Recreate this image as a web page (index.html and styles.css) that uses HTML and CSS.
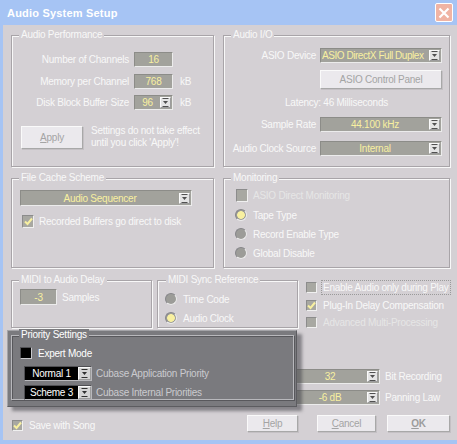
FILE: index.html
```html
<!DOCTYPE html>
<html>
<head>
    <title>Audio System Setup</title>
    <link rel="stylesheet" href="styles.css">
</head>
<body>
<div class="window">
    <div class="titlebar">
        <span class="title">Audio System Setup</span>
        <span class="close-btn">
            <svg width="12" height="12" viewBox="0 0 12 12"><path d="M1.5 1.5l9 9M10.5 1.5l-9 9" stroke="#fff" stroke-width="2.2" fill="none"/></svg>
        </span>
    </div>

    <div class="dialog">
        <div class="grid">
            <!-- Audio Performance -->
            <div class="group perf">
                <div class="group-title">Audio Performance</div>
                <div class="form-rows">
                    <div class="form-row">
                        <span class="lbl">Number of Channels</span>
                        <span class="field num">16</span>
                    </div>
                    <div class="form-row">
                        <span class="lbl">Memory per Channel</span>
                        <span class="field num">768</span>
                        <span class="unit">kB</span>
                    </div>
                    <div class="form-row">
                        <span class="lbl">Disk Block Buffer Size</span>
                        <span class="field num select">
                            <span class="val">96</span>
                            <span class="spin"><svg width="7" height="9" viewBox="0 0 7 9"><path d="M0.5 0.5h6M0.5 8.5h6" stroke="#505050"/><path d="M1 3h5L3.5 6z" fill="#505050"/></svg></span>
                        </span>
                        <span class="unit">kB</span>
                    </div>
                </div>
                <div class="apply-row">
                    <span class="btn apply-btn"><u>A</u>pply</span>
                    <span class="apply-note">Settings do not take effect<br>until you click 'Apply'!</span>
                </div>
            </div>

            <!-- Audio I/O -->
            <div class="group io">
                <div class="group-title">Audio I/O</div>
                <div class="io-row first">
                    <span class="io-lbl">ASIO Device</span>
                    <span class="field select io-field">
                        <span class="val left">ASIO DirectX Full Duplex</span>
                        <span class="spin"><svg width="7" height="9" viewBox="0 0 7 9"><path d="M0.5 0.5h6M0.5 8.5h6" stroke="#505050"/><path d="M1 3h5L3.5 6z" fill="#505050"/></svg></span>
                    </span>
                </div>
                <span class="btn control-btn">ASIO Control Panel</span>
                <div class="latency">Latency: 46 Milliseconds</div>
                <div class="io-row rate">
                    <span class="io-lbl">Sample Rate</span>
                    <span class="field select io-field">
                        <span class="val">44.100 kHz</span>
                        <span class="spin"><svg width="7" height="9" viewBox="0 0 7 9"><path d="M0.5 0.5h6M0.5 8.5h6" stroke="#505050"/><path d="M1 3h5L3.5 6z" fill="#505050"/></svg></span>
                    </span>
                </div>
                <div class="io-row clock">
                    <span class="io-lbl">Audio Clock Source</span>
                    <span class="field select io-field">
                        <span class="val">Internal</span>
                        <span class="spin"><svg width="7" height="9" viewBox="0 0 7 9"><path d="M0.5 0.5h6M0.5 8.5h6" stroke="#505050"/><path d="M1 3h5L3.5 6z" fill="#505050"/></svg></span>
                    </span>
                </div>
            </div>

            <!-- File Cache Scheme -->
            <div class="group cache">
                <div class="group-title">File Cache Scheme</div>
                <span class="field select cache-field">
                    <span class="val">Audio Sequencer</span>
                    <span class="spin"><svg width="7" height="9" viewBox="0 0 7 9"><path d="M0.5 0.5h6M0.5 8.5h6" stroke="#505050"/><path d="M1 3h5L3.5 6z" fill="#505050"/></svg></span>
                </span>
                <div class="check-row cache-check">
                    <span class="checkbox big"><svg width="9" height="9" viewBox="0 0 9 9"><path d="M1 4.5l2.5 2.5L8 1.5" stroke="#f8f0a0" stroke-width="2" fill="none"/></svg></span>
                    Recorded Buffers go direct to disk
                </div>
            </div>

            <!-- Monitoring -->
            <div class="group monitor">
                <div class="group-title">Monitoring</div>
                <div class="check-row mon-check disabled">
                    <span class="checkbox big"></span>
                    ASIO Direct Monitoring
                </div>
                <div class="radio-row"><span class="radio on"></span>Tape Type</div>
                <div class="radio-row"><span class="radio"></span>Record Enable Type</div>
                <div class="radio-row"><span class="radio"></span>Global Disable</div>
            </div>
        </div>

        <div class="row3">
            <div class="group midi-delay">
                <div class="group-title">MIDI to Audio Delay</div>
                <div class="delay-row">
                    <span class="field delay-field">-3</span>
                    <span>Samples</span>
                </div>
            </div>
            <div class="group midi-sync">
                <div class="group-title">MIDI Sync Reference</div>
                <div class="radio-row"><span class="radio"></span>Time Code</div>
                <div class="radio-row"><span class="radio on"></span>Audio Clock</div>
            </div>
            <div class="options">
                <div class="check-row opt">
                    <span class="checkbox"></span>
                    <span class="focus">Enable Audio only during Play</span>
                </div>
                <div class="check-row opt">
                    <span class="checkbox"><svg width="9" height="9" viewBox="0 0 9 9"><path d="M1 4.5l2.5 2.5L8 1.5" stroke="#f8f0a0" stroke-width="2" fill="none"/></svg></span>
                    <span class="opt-text">Plug-In Delay Compensation</span>
                </div>
                <div class="check-row opt disabled">
                    <span class="checkbox"></span>
                    <span class="opt-text">Advanced Multi-Processing</span>
                </div>
            </div>
        </div>

        <div class="row4">
            <div class="bit-row">
                <span class="field select bit-field">
                    <span class="val">32</span>
                    <span class="spin"><svg width="7" height="9" viewBox="0 0 7 9"><path d="M0.5 0.5h6M0.5 8.5h6" stroke="#505050"/><path d="M1 3h5L3.5 6z" fill="#505050"/></svg></span>
                </span>
                <span>Bit Recording</span>
            </div>
            <div class="bit-row">
                <span class="field select bit-field">
                    <span class="val">-6 dB</span>
                    <span class="spin"><svg width="7" height="9" viewBox="0 0 7 9"><path d="M0.5 0.5h6M0.5 8.5h6" stroke="#505050"/><path d="M1 3h5L3.5 6z" fill="#505050"/></svg></span>
                </span>
                <span>Panning Law</span>
            </div>
        </div>

        <div class="row5">
            <div class="check-row save">
                <span class="checkbox"><svg width="9" height="9" viewBox="0 0 9 9"><path d="M1 4.5l2.5 2.5L8 1.5" stroke="#f8f0a0" stroke-width="2" fill="none"/></svg></span>
                Save with Song
            </div>
            <span class="btn help-btn"><u>H</u>elp</span>
            <span class="btn cancel-btn"><u>C</u>ancel</span>
            <span class="btn ok-btn"><u>O</u>K</span>
        </div>
    </div>

    <!-- floating priority settings panel -->
    <div class="priority-panel">
        <div class="group dark">
            <div class="group-title">Priority Settings</div>
            <div class="check-row expert">
                <span class="checkbox black"></span>
                Expert Mode
            </div>
            <div class="prio-row first">
                <span class="field select black-select">
                    <span class="val">Normal 1</span>
                    <span class="spin light"><svg width="7" height="9" viewBox="0 0 7 9"><path d="M0.5 0.5h6M0.5 8.5h6" stroke="#303030"/><path d="M1 3h5L3.5 6z" fill="#303030"/></svg></span>
                </span>
                <span class="prio-lbl">Cubase Application Priority</span>
            </div>
            <div class="prio-row">
                <span class="field select black-select">
                    <span class="val">Scheme 3</span>
                    <span class="spin light"><svg width="7" height="9" viewBox="0 0 7 9"><path d="M0.5 0.5h6M0.5 8.5h6" stroke="#303030"/><path d="M1 3h5L3.5 6z" fill="#303030"/></svg></span>
                </span>
                <span class="prio-lbl">Cubase Internal Priorities</span>
            </div>
        </div>
    </div>
</div>
</body>
</html>
```

FILE: styles.css
```css
body {
    margin: 0;
    font-family: "Liberation Sans", Arial, sans-serif;
    font-size: 10px;
    letter-spacing: -0.25px;
    color: #f8f8f8;
}
.window {
    position: relative;
    width: 457px;
    height: 444px;
    box-sizing: border-box;
    background: #d4d0d4;
    border-left: 3px solid #a6c4f4;
    border-bottom: 4px solid #a6c4f4;
    overflow: hidden;
}
.titlebar {
    height: 25px;
    padding: 0 4px;
    background: #a6c4f4;
    display: flex;
    align-items: center;
}
.title {
    font-size: 11px;
    font-weight: bold;
    letter-spacing: 0.2px;
    color: #fff;
}
.close-btn {
    margin-left: auto;
    width: 16px;
    height: 17px;
    background: #f0b4a4;
    border: 1px solid #fff;
    border-radius: 2px;
    display: flex;
    align-items: center;
    justify-content: center;
}

.dialog {
    padding: 10px 7px 0 8px;
}
.grid {
    display: grid;
    grid-template-columns: 203px 227px;
    grid-template-rows: 132px 90px;
    gap: 11px 9px;
}

/* group boxes */
.group {
    box-sizing: border-box;
    border: 1px solid #a8a4a8;
    box-shadow: inset 1px 1px 0 #f8f8f8, 1px 1px 0 #f8f8f8;
}
.group-title {
    width: max-content;
    margin: -7px 0 0 7px;
    padding: 0 2px;
    line-height: 12px;
    background: #d4d0d4;
}

/* fields */
.field {
    box-sizing: border-box;
    height: 15px;
    background: #a2a29c;
    border: 1px solid;
    border-color: #8c8c88 #ececec #ececec #8c8c88;
    color: #f8f0a0;
    display: flex;
    align-items: center;
    justify-content: center;
    line-height: 13px;
}
.field .val {
    flex: 1;
    text-align: center;
    white-space: nowrap;
    overflow: hidden;
}
.field .val.left {
    text-align: left;
    padding-left: 1px;
    letter-spacing: -0.45px;
}
.spin {
    box-sizing: border-box;
    width: 11px;
    height: 11px;
    margin-right: 1px;
    background: #e4e4e4;
    border: 1px solid;
    border-color: #fafafa #9c9c9c #9c9c9c #fafafa;
    display: flex;
    align-items: center;
    justify-content: center;
    flex-shrink: 0;
}

.btn {
    box-sizing: border-box;
    background: #ebe9ed;
    border: 1px solid;
    border-color: #fafafa #a8a8a8 #a8a8a8 #fafafa;
    box-shadow: 1px 1px 0 #c4c0c4;
    color: #a4a4a4;
    display: flex;
    align-items: center;
    justify-content: center;
}

/* audio performance */
.form-rows {
    margin-top: 11px;
    display: flex;
    flex-direction: column;
    gap: 6.5px;
}
.form-row {
    height: 15px;
    display: flex;
    align-items: center;
}
.lbl {
    width: 117px;
    text-align: right;
    margin-right: 5px;
}
.field.num {
    width: 39px;
}
.unit {
    margin-left: 7px;
}
.apply-row {
    margin: 15px 0 0 9px;
    display: flex;
    align-items: center;
}
.apply-btn {
    width: 62px;
    height: 23px;
}
.apply-note {
    margin-left: 8px;
    line-height: 12px;
}

/* audio i/o */
.io-row {
    display: flex;
    align-items: center;
    height: 15px;
}
.io-row.first {
    margin-top: 7px;
}
.io-row.rate {
    margin-top: 8px;
}
.io-row.clock {
    margin-top: 9px;
}
.io-lbl {
    width: 92px;
    margin-right: 4px;
    text-align: right;
    white-space: nowrap;
}
.io-field {
    width: 122px;
}
.control-btn {
    width: 122px;
    height: 19px;
    margin: 7px 0 0 96px;
}
.latency {
    margin-top: 8px;
    line-height: 12px;
    text-align: center;
}

/* file cache */
.cache-field {
    width: 172px;
    height: 16px;
    margin: 6px 0 0 8px;
}
.check-row {
    display: flex;
    align-items: center;
    white-space: nowrap;
}
.checkbox {
    box-sizing: border-box;
    width: 11px;
    height: 11px;
    margin-right: 6px;
    background: #a8a8a2;
    border: 1px solid;
    border-color: #8c8c8c #f0f0f0 #f0f0f0 #8c8c8c;
    display: flex;
    align-items: center;
    justify-content: center;
    flex-shrink: 0;
}
.checkbox.big {
    width: 12px;
    height: 13px;
    margin-right: 5px;
}
.cache-check {
    margin: 9px 0 0 10px;
}
.disabled {
    color: #e6e6e6;
}

/* monitoring */
.mon-check {
    margin: 5px 0 0 12px;
}
.radio-row {
    height: 12px;
    display: flex;
    align-items: center;
    margin: 7px 0 0 11px;
}
.monitor .radio-row:nth-of-type(1) {
    margin-top: 8px;
}
.radio {
    box-sizing: border-box;
    width: 12px;
    height: 12px;
    border-radius: 50%;
    margin-right: 6px;
    background: #9c9c98;
    border: 1px solid;
    border-color: #86868a #ececec #ececec #86868a;
}
.radio.on {
    background: radial-gradient(circle, #f8f0a0 0 3.5px, #9c9c98 4.2px);
}

/* third row */
.row3 {
    margin-top: 12px;
    display: flex;
}
.midi-delay,
.midi-sync {
    width: 141px;
    height: 48px;
    flex-shrink: 0;
}
.midi-sync {
    margin-left: 5px;
}
.midi-sync .group-title {
    margin-left: 8px;
}
.delay-row {
    margin: 3px 0 0 8px;
    display: flex;
    align-items: center;
}
.delay-field {
    width: 37px;
    height: 16px;
    margin-right: 5px;
}
.midi-sync .radio-row {
    margin-left: 7px;
}
.midi-sync .radio-row:nth-of-type(1) {
    margin-top: 5px;
}
.options {
    margin-left: 8px;
    display: flex;
    flex-direction: column;
    gap: 2.5px;
}
.opt {
    height: 15px;
}
.opt .checkbox {
    margin-right: 4px;
}
.focus {
    padding: 0 1px;
    line-height: 13px;
    border: 1px dotted #9a9a9a;
}
.opt-text {
    margin-left: 2px;
}

/* fourth row */
.row4 {
    margin: 39px 0 0 281px;
    display: flex;
    flex-direction: column;
    gap: 6px;
}
.bit-row {
    display: flex;
    align-items: center;
}
.bit-field {
    width: 88px;
    margin-right: 5px;
}

/* bottom row */
.row5 {
    margin-top: 10px;
    display: flex;
    align-items: center;
    height: 17px;
}
.save {
    margin: 3px 0 0 1px;
}
.help-btn,
.cancel-btn,
.ok-btn {
    height: 17px;
}
.help-btn {
    width: 51px;
    margin-left: auto;
}
.cancel-btn {
    width: 59px;
    margin-left: 19px;
}
.ok-btn {
    width: 63px;
    margin-left: 11px;
    font-weight: bold;
    color: #9c9c9c;
}

/* priority overlay */
.priority-panel {
    position: absolute;
    left: 4px;
    top: 330px;
    width: 290px;
    height: 77px;
    box-sizing: border-box;
    padding: 5px 2px 5px 4px;
    background: #7a7a7e;
    border: 1px solid;
    border-color: #a4a4a8 #5c5c60 #5c5c60 #a4a4a8;
    box-shadow: 5px 4px 3px rgba(70, 70, 74, 0.55);
}
.group.dark {
    height: 100%;
    margin: -1px 0 0 -1px;
    border-color: #b8b8bc;
    box-shadow: inset 1px 1px 0 #58585c, 1px 1px 0 #58585c;
}
.dark .group-title {
    background: #7a7a7e;
    color: #fff;
}
.expert {
    margin: 6px 0 0 8px;
    color: #fff;
}
.checkbox.black {
    width: 12px;
    height: 12px;
    background: #000;
    border-color: #505054 #c8c8cc #c8c8cc #505054;
}
.prio-row {
    margin: 4px 0 0 12px;
    display: flex;
    align-items: center;
}
.prio-row.first {
    margin-top: 7px;
}
.black-select {
    width: 68px;
    background: #000;
    border-color: #505054 #b8b8bc #b8b8bc #505054;
    color: #fff;
}
.spin.light {
    width: 13px;
    height: 13px;
    margin-right: 0;
    background: #d4d4d4;
}
.prio-lbl {
    margin-left: 4px;
    color: #cacace;
}
```
